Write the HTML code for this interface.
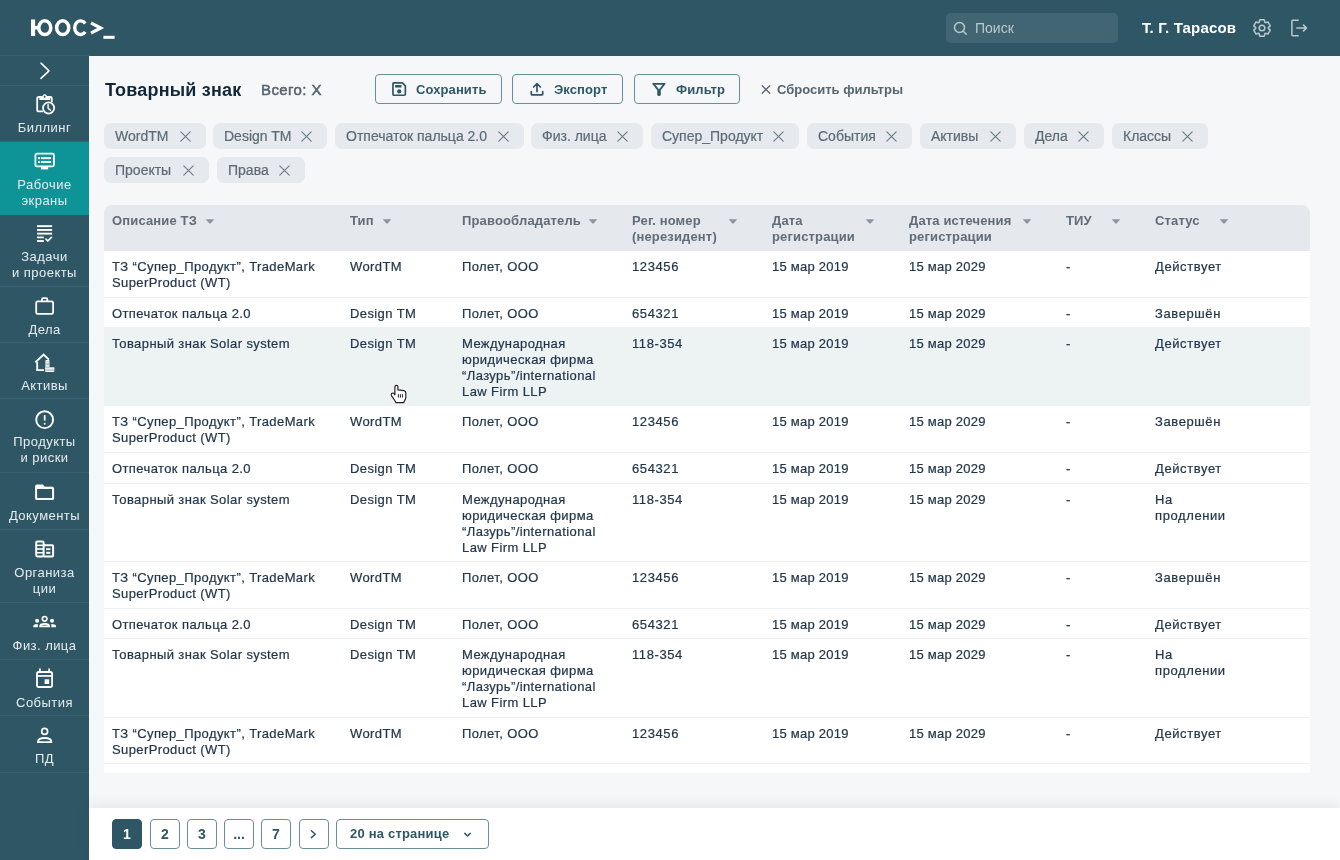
<!DOCTYPE html>
<html lang="ru"><head><meta charset="utf-8">
<style>
*{box-sizing:border-box;margin:0;padding:0}
html,body{width:1340px;height:860px;overflow:hidden}
body{will-change:transform}
body{position:relative;background:#F6F7F9;font-family:"Liberation Sans",sans-serif;color:#1F3446}
.abs{position:absolute}
#hdr{left:0;top:0;width:1340px;height:56px;background:#2E5665}
#logo{left:30px;top:13px;font-size:24px;font-weight:700;color:#fff;letter-spacing:-0.6px;line-height:30px}
#search{left:946px;top:13px;width:172px;height:30px;background:#416572;border-radius:5px}
#search span{position:absolute;left:29px;top:7px;font-size:14px;line-height:16px;color:#B9C9CD}
#user{left:1142px;top:18px;font-size:15px;font-weight:700;color:#fff;line-height:20px;letter-spacing:0.15px}
#side{left:0;top:56px;width:89px;height:804px;background:#2E5665}
.si{position:absolute;left:0;width:89px;text-align:center;color:#E6EDEF;font-size:13px;line-height:16px;letter-spacing:0.45px}
.si .tx{position:absolute;left:0;width:89px;top:35px}
.si.act{background:#0E9496}
.sep{position:absolute;left:0;width:89px;height:1px;background:#3A6372}
#main{left:89px;top:56px;width:1251px;height:804px}

/*MAIN*/
.title{font-size:18px;font-weight:700;color:#12263A;line-height:22px;letter-spacing:0.2px}
.total{font-size:15px;color:#56646F;line-height:18px;letter-spacing:0.4px;-webkit-text-stroke:0.5px #56646F}
.btn{top:74px;height:30px;border:1px solid #6A8E98;border-radius:4px}
.btxt{top:82px;font-size:13px;font-weight:700;color:#2E5665;line-height:16px;letter-spacing:0.1px}
.rst{top:82px;font-size:13px;font-weight:700;color:#56656F;line-height:16px}
.chip{height:26px;background:#E6E9ED;border-radius:7px}
.chip span{position:absolute;left:11px;top:5px;font-size:14px;line-height:16px;color:#5D6B75;-webkit-text-stroke:0.2px #5D6B75}
.tbox{left:104px;top:205px;width:1206px;height:568px;background:#fff;border-radius:8px 8px 0 0}
.thead{left:104px;top:205px;width:1206px;height:46px;background:#E5E8EC;border-radius:8px 8px 0 0}
.th{top:213px;font-size:13px;font-weight:700;color:#606D78;line-height:16px;letter-spacing:0.15px}
.hl{left:104px;width:1206px;background:#EDF2F3}
.bd{left:104px;width:1206px;height:1px;background:#EFF1F3}
.td{font-size:13px;color:#22364A;line-height:16px;letter-spacing:0.4px;white-space:nowrap;-webkit-text-stroke:0.2px #22364A}
.foot{left:89px;top:808px;width:1251px;height:52px;background:#fff;box-shadow:0 -4px 12px rgba(40,60,80,0.08)}
.pg{top:819px;width:30px;height:30px;border:1px solid #6A8E98;border-radius:4px;text-align:center;font-size:14px;font-weight:700;color:#2E5665;line-height:28px}
.pg.act{background:#2E5665;border-color:#2E5665;color:#fff}
.pg.sel{text-align:left}
.pg.sel span{position:absolute;left:13px;top:0;font-size:13px;letter-spacing:0.2px}
/*ENDMAIN*/
</style></head><body>
<div id="hdr" class="abs">
  <svg class="abs" style="left:0;top:0" width="130" height="56" viewBox="0 0 130 56"><g fill="#fff">
<rect x="31" y="19.5" width="4.1" height="16.5"/><rect x="34" y="25.9" width="4" height="3.6"/></g>
<g fill="none" stroke="#fff" stroke-width="3.5"><ellipse cx="44.8" cy="27.7" rx="6.0" ry="6.85"/><ellipse cx="62.7" cy="27.7" rx="6.05" ry="6.85"/>
<path d="M85.25 23.48 A5.9 6.85 0 1 0 85.25 31.92" stroke-width="3.4"/>
<path d="M91 22.9 L100.6 28 L91 33.1" stroke-width="3.3" stroke-linejoin="miter" stroke-miterlimit="10"/></g>
<rect x="103.4" y="35.8" width="11.2" height="3" fill="#fff"/></svg>
  <div id="search" class="abs">
    <svg class="abs" style="left:7px;top:8px" width="15" height="15" viewBox="0 0 15 15"><circle cx="6.5" cy="6.5" r="5" fill="none" stroke="#B9C9CD" stroke-width="1.5"/><path d="M10.2 10.2 L13.3 13.3" stroke="#B9C9CD" stroke-width="1.5" stroke-linecap="round"/></svg>
    <span>Поиск</span>
  </div>
  <div id="user" class="abs">Т. Г. Тарасов</div>
  <svg class="abs" style="left:1247px;top:13px" width="30" height="30" viewBox="0 0 30 30"><path d="M12.15 9.38 L12.73 6.81 L17.27 6.81 L17.85 9.38 L18.44 9.72 L20.96 8.94 L23.23 12.87 L21.29 14.66 L21.29 15.34 L23.23 17.13 L20.96 21.06 L18.44 20.28 L17.85 20.62 L17.27 23.19 L12.73 23.19 L12.15 20.62 L11.56 20.28 L9.04 21.06 L6.77 17.13 L8.71 15.34 L8.71 14.66 L6.77 12.87 L9.04 8.94 L11.56 9.72 Z" fill="none" stroke="#B9C9CD" stroke-width="1.5" stroke-linejoin="round"/><circle cx="15" cy="15" r="2.8" fill="none" stroke="#B9C9CD" stroke-width="1.5"/></svg>
  <svg class="abs" style="left:1285px;top:13px" width="30" height="30" viewBox="0 0 30 30"><path d="M13.7 7.3 H7.9 Q6.9 7.3 6.9 8.3 V21.7 Q6.9 22.7 7.9 22.7 H13.7" fill="none" stroke="#B9C9CD" stroke-width="1.5" stroke-linecap="butt"/><path d="M11.9 15 H21.2 M18.5 12.1 L21.5 15 L18.5 17.9" fill="none" stroke="#B9C9CD" stroke-width="1.6" stroke-linecap="round" stroke-linejoin="round"/></svg>
</div>
<div id="side" class="abs"></div>
<div id="sidec">
<div class="sep" style="top:55px"></div>
<div class="sep" style="top:85px"></div>
<div class="si" style="top:85.5px;height:56.5px"><div class="tx" style="top:34px">Биллинг</div></div>
<div class="sep" style="top:141.0px"></div>
<div class="si act" style="top:142.0px;height:73.0px"><div class="tx">Рабочие<br>экраны</div></div>
<div class="si" style="top:215.0px;height:71.5px"><div class="tx" style="top:34px;line-height:15.5px">Задачи<br>и проекты</div></div>
<div class="sep" style="top:285.5px"></div>
<div class="si" style="top:286.5px;height:56.2px"><div class="tx">Дела</div></div>
<div class="sep" style="top:341.7px"></div>
<div class="si" style="top:342.7px;height:56.6px"><div class="tx">Активы</div></div>
<div class="sep" style="top:398.3px"></div>
<div class="si" style="top:399.3px;height:74.1px"><div class="tx">Продукты<br>и риски</div></div>
<div class="sep" style="top:472.4px"></div>
<div class="si" style="top:473.4px;height:56.8px"><div class="tx">Документы</div></div>
<div class="sep" style="top:529.2px"></div>
<div class="si" style="top:530.2px;height:72.6px"><div class="tx">Организа<br>ции</div></div>
<div class="sep" style="top:601.8px"></div>
<div class="si" style="top:602.8px;height:56.8px"><div class="tx">Физ. лица</div></div>
<div class="sep" style="top:658.6px"></div>
<div class="si" style="top:659.6px;height:56.0px"><div class="tx">События</div></div>
<div class="sep" style="top:714.6px"></div>
<div class="si" style="top:715.6px;height:57.7px"><div class="tx">ПД</div></div>
<div class="sep" style="top:772.3px"></div>
<svg class="abs" style="left:30px;top:56px" width="30" height="30" viewBox="0 0 30 30"><path d="M11 7.2 L19 14.8 L11 22.4" fill="none" stroke="#fff" stroke-width="1.6" stroke-linecap="round" stroke-linejoin="round"/></svg>
<svg class="abs" style="left:30px;top:90px" width="30" height="30" viewBox="0 0 30 30"><path d="M12.4 21.4 H8.7 Q7.2 21.4 7.2 19.9 V8.5 Q7.2 7 8.7 7 H12 M17.3 7 H20.3 Q21.8 7 21.8 8.5 V11.6" fill="none" stroke="#fff" stroke-width="1.8" stroke-linecap="round"/>
<path d="M9.4 9.9 V8.1 H12.1 Q12.2 4.3 14.65 4.3 Q17.1 4.3 17.2 8.1 H20.2 V9.9 Z" fill="#fff"/><circle cx="14.65" cy="6.8" r="1" fill="#2E5665"/>
<circle cx="18.6" cy="18" r="5.6" fill="none" stroke="#fff" stroke-width="1.7"/><path d="M18.1 14.5 V18.3 L20.6 20.4" fill="none" stroke="#fff" stroke-width="1.4" stroke-linecap="round" stroke-linejoin="round"/></svg>
<svg class="abs" style="left:30px;top:146px" width="30" height="30" viewBox="0 0 30 30"><rect x="5.4" y="7.7" width="18.5" height="12.7" rx="1.5" fill="none" stroke="#fff" stroke-width="1.8"/>
<rect x="8" y="11.2" width="2.1" height="1.9" fill="#fff"/><rect x="8" y="15" width="2.1" height="1.9" fill="#fff"/>
<rect x="11" y="11.2" width="10.1" height="1.9" fill="#fff"/><rect x="11" y="15" width="10.1" height="1.9" fill="#fff"/>
<rect x="11" y="20.6" width="7.1" height="2.8" fill="#fff"/></svg>
<svg class="abs" style="left:30px;top:218px" width="30" height="30" viewBox="0 0 30 30"><g fill="#fff"><rect x="7" y="7.2" width="15.1" height="1.9"/><rect x="7" y="11" width="15.1" height="1.9"/><rect x="7" y="14.7" width="15.1" height="1.9"/>
<rect x="7" y="18.5" width="6.8" height="1.8"/><rect x="7" y="22.1" width="6.8" height="1.9"/></g>
<path d="M16 21.2 L17.8 23 L21.4 19.3" fill="none" stroke="#fff" stroke-width="1.7" stroke-linecap="round" stroke-linejoin="round"/></svg>
<svg class="abs" style="left:30px;top:290px" width="30" height="30" viewBox="0 0 30 30"><rect x="6.2" y="11.4" width="16.9" height="12.5" rx="1.6" fill="none" stroke="#fff" stroke-width="1.8"/>
<path d="M12 11.2 V9.3 Q12 8.1 13.2 8.1 H16.1 Q17.3 8.1 17.3 9.3 V11.2" fill="none" stroke="#fff" stroke-width="1.8"/></svg>
<svg class="abs" style="left:30px;top:347px" width="30" height="30" viewBox="0 0 30 30"><path d="M14 23.1 H7.2 V15.3 M5.3 15.4 L13.6 7.5 L18.9 12.6" fill="none" stroke="#fff" stroke-width="1.9" stroke-linejoin="miter"/>
<g fill="#fff"><rect x="15.3" y="13.1" width="4.2" height="11.8" rx="0.8"/><rect x="15.3" y="20" width="9.1" height="4.9" rx="0.8"/></g>
<g fill="#2E5665" opacity="0.6"><rect x="15.3" y="14.6" width="4.2" height="0.55"/><rect x="15.3" y="16.0" width="4.2" height="0.55"/><rect x="15.3" y="17.4" width="4.2" height="0.55"/><rect x="15.3" y="18.8" width="4.2" height="0.55"/><rect x="15.3" y="20.5" width="9.1" height="0.55"/><rect x="15.3" y="21.9" width="9.1" height="0.55"/><rect x="15.3" y="23.3" width="9.1" height="0.55"/></g></svg>
<svg class="abs" style="left:30px;top:404px" width="30" height="30" viewBox="0 0 30 30"><circle cx="14.65" cy="15.7" r="8.45" fill="none" stroke="#fff" stroke-width="1.9"/>
<rect x="13.85" y="11.2" width="1.7" height="5.4" fill="#fff"/><rect x="13.85" y="18.8" width="1.7" height="1.8" fill="#fff"/></svg>
<svg class="abs" style="left:30px;top:476px" width="30" height="30" viewBox="0 0 30 30"><path d="M6.1 22.4 V10.4 Q6.1 9.6 7 9.6 H12.6 L14.3 11.8 H22.3 Q23.1 11.8 23.1 12.7 V22.4 Q23.1 23.1 22.3 23.1 H7 Q6.1 23.1 6.1 22.4 Z" fill="none" stroke="#fff" stroke-width="2" stroke-linejoin="round"/>
<path d="M6.1 11.9 H23" stroke="#fff" stroke-width="2"/><path d="M6 9.4 H12.8 L14.6 12.4 H6 Z" fill="#fff"/></svg>
<svg class="abs" style="left:30px;top:533px" width="30" height="30" viewBox="0 0 30 30"><rect x="6.2" y="8.5" width="7.4" height="14.9" rx="1.3" fill="none" stroke="#fff" stroke-width="2"/>
<g fill="#fff"><rect x="6.2" y="11.6" width="7.4" height="1.5"/><rect x="6.2" y="15.2" width="7.4" height="1.6"/><rect x="6.2" y="19" width="7.4" height="1.5"/></g>
<path d="M13.6 12.2 H22.1 Q23.1 12.2 23.1 13.2 V22.4 Q23.1 23.4 22.1 23.4 H13.6" fill="none" stroke="#fff" stroke-width="2"/>
<g fill="#fff"><rect x="16.2" y="15.2" width="4.2" height="1.9"/><rect x="16.2" y="18.8" width="4.2" height="2"/></g></svg>
<svg class="abs" style="left:30px;top:605px" width="30" height="30" viewBox="0 0 30 30"><circle cx="14.65" cy="13.8" r="2.3" fill="none" stroke="#fff" stroke-width="1.6"/>
<path d="M10 21.4 Q10 18.9 14.65 18.9 Q19.3 18.9 19.3 21.4 Z" fill="none" stroke="#fff" stroke-width="1.7" stroke-linejoin="round"/>
<g fill="#fff"><circle cx="7.15" cy="15.7" r="2"/><circle cx="22" cy="15.7" r="2"/>
<path d="M3.3 22.3 V21 Q3.5 19 7.8 19 V22.3 Z"/><path d="M21.3 22.3 V19 Q25.8 19 26 21 V22.3 Z"/></g></svg>
<svg class="abs" style="left:30px;top:662px" width="30" height="30" viewBox="0 0 30 30"><rect x="7" y="10" width="15.1" height="15" rx="1.8" fill="none" stroke="#fff" stroke-width="1.8"/>
<path d="M7 13.95 H22" stroke="#fff" stroke-width="1.7"/><path d="M9.95 7 V10 M19.15 7 V10" stroke="#fff" stroke-width="1.7" stroke-linecap="round"/>
<rect x="14.6" y="17.3" width="4.6" height="4.7" fill="#fff"/></svg>
<svg class="abs" style="left:30px;top:719px" width="30" height="30" viewBox="0 0 30 30"><circle cx="14.65" cy="12.4" r="2.95" fill="none" stroke="#fff" stroke-width="1.7"/>
<path d="M7.9 23.2 Q7.9 19 14.65 19 Q21.4 19 21.4 23.2 Z" fill="none" stroke="#fff" stroke-width="1.8" stroke-linejoin="round"/></svg>
</div>
<div id="main" class="abs"></div>
<!--MC-->
<div class="abs title" style="left:105px;top:79px">Товарный знак</div>
<div class="abs total" style="left:261px;top:81px">Всего: X</div>
<div class="abs btn" style="left:375px;width:127px"></div><svg class="abs" style="left:390px;top:81px" width="18" height="18" viewBox="0 0 18 18"><path d="M4.1 1.85 H12.3 L15.35 4.9 V13.1 Q15.35 14.25 14.2 14.25 H4.1 Q2.95 14.25 2.95 13.1 V3 Q2.95 1.85 4.1 1.85 Z" fill="none" stroke="#2E5665" stroke-width="1.7" stroke-linejoin="round"/><rect x="5" y="4.1" width="6.5" height="2.5" rx="0.4" fill="#2E5665"/><circle cx="9.2" cy="10.4" r="2.1" fill="#2E5665"/></svg><div class="abs btxt" style="left:416px">Сохранить</div>
<div class="abs btn" style="left:512px;width:111px"></div><svg class="abs" style="left:528px;top:81px" width="18" height="18" viewBox="0 0 18 18"><path d="M9 10.6 V2.8 M5.6 6 L9 2.6 L12.4 6" fill="none" stroke="#2E5665" stroke-width="1.7" stroke-linecap="round" stroke-linejoin="round"/><path d="M3.3 10.7 V12.9 Q3.3 13.9 4.3 13.9 H13.7 Q14.7 13.9 14.7 12.9 V10.7" fill="none" stroke="#2E5665" stroke-width="1.7" stroke-linecap="round"/></svg><div class="abs btxt" style="left:554px">Экспорт</div>
<div class="abs btn" style="left:634px;width:106px"></div><svg class="abs" style="left:650px;top:81px" width="18" height="18" viewBox="0 0 18 18"><path d="M3.4 2.8 H14.6 L10.2 8.4" fill="none" stroke="#2E5665" stroke-width="1.8" stroke-linejoin="round" stroke-linecap="round"/><path d="M3.4 2.8 L7.8 8.4" fill="none" stroke="#2E5665" stroke-width="1.8" stroke-linecap="round"/><path d="M7.25 8.2 H10.75 V13.4 Q10.75 15.1 9 15.1 Q7.25 15.1 7.25 13.4 Z" fill="#2E5665"/></svg><div class="abs btxt" style="left:676px">Фильтр</div>
<svg class="abs" style="left:759px;top:83px" width="13" height="13" viewBox="0 0 13 13"><path d="M3.2 2.7 L10.8 10.3 M10.8 2.7 L3.2 10.3" stroke="#56656F" stroke-width="1.25" stroke-linecap="round"/></svg>
<div class="abs rst" style="left:777px">Сбросить фильтры</div>
<div class="abs chip" style="left:104px;top:123px;width:102px"><span>WordTM</span><svg style="position:absolute;right:15px;top:8px" width="11" height="11" viewBox="0 0 11 11"><path d="M0.8 0.8 L10.2 10.2 M10.2 0.8 L0.8 10.2" stroke="#6F7C86" stroke-width="1.15" stroke-linecap="round"/></svg></div>
<div class="abs chip" style="left:213px;top:123px;width:114px"><span>Design TM</span><svg style="position:absolute;right:15px;top:8px" width="11" height="11" viewBox="0 0 11 11"><path d="M0.8 0.8 L10.2 10.2 M10.2 0.8 L0.8 10.2" stroke="#6F7C86" stroke-width="1.15" stroke-linecap="round"/></svg></div>
<div class="abs chip" style="left:335px;top:123px;width:189px"><span>Отпечаток пальца 2.0</span><svg style="position:absolute;right:15px;top:8px" width="11" height="11" viewBox="0 0 11 11"><path d="M0.8 0.8 L10.2 10.2 M10.2 0.8 L0.8 10.2" stroke="#6F7C86" stroke-width="1.15" stroke-linecap="round"/></svg></div>
<div class="abs chip" style="left:531px;top:123px;width:112px"><span>Физ. лица</span><svg style="position:absolute;right:15px;top:8px" width="11" height="11" viewBox="0 0 11 11"><path d="M0.8 0.8 L10.2 10.2 M10.2 0.8 L0.8 10.2" stroke="#6F7C86" stroke-width="1.15" stroke-linecap="round"/></svg></div>
<div class="abs chip" style="left:651px;top:123px;width:148px"><span>Супер_Продукт</span><svg style="position:absolute;right:15px;top:8px" width="11" height="11" viewBox="0 0 11 11"><path d="M0.8 0.8 L10.2 10.2 M10.2 0.8 L0.8 10.2" stroke="#6F7C86" stroke-width="1.15" stroke-linecap="round"/></svg></div>
<div class="abs chip" style="left:807px;top:123px;width:105px"><span>События</span><svg style="position:absolute;right:15px;top:8px" width="11" height="11" viewBox="0 0 11 11"><path d="M0.8 0.8 L10.2 10.2 M10.2 0.8 L0.8 10.2" stroke="#6F7C86" stroke-width="1.15" stroke-linecap="round"/></svg></div>
<div class="abs chip" style="left:920px;top:123px;width:96px"><span>Активы</span><svg style="position:absolute;right:15px;top:8px" width="11" height="11" viewBox="0 0 11 11"><path d="M0.8 0.8 L10.2 10.2 M10.2 0.8 L0.8 10.2" stroke="#6F7C86" stroke-width="1.15" stroke-linecap="round"/></svg></div>
<div class="abs chip" style="left:1024px;top:123px;width:80px"><span>Дела</span><svg style="position:absolute;right:15px;top:8px" width="11" height="11" viewBox="0 0 11 11"><path d="M0.8 0.8 L10.2 10.2 M10.2 0.8 L0.8 10.2" stroke="#6F7C86" stroke-width="1.15" stroke-linecap="round"/></svg></div>
<div class="abs chip" style="left:1112px;top:123px;width:96px"><span>Классы</span><svg style="position:absolute;right:15px;top:8px" width="11" height="11" viewBox="0 0 11 11"><path d="M0.8 0.8 L10.2 10.2 M10.2 0.8 L0.8 10.2" stroke="#6F7C86" stroke-width="1.15" stroke-linecap="round"/></svg></div>
<div class="abs chip" style="left:104px;top:157px;width:105px"><span>Проекты</span><svg style="position:absolute;right:15px;top:8px" width="11" height="11" viewBox="0 0 11 11"><path d="M0.8 0.8 L10.2 10.2 M10.2 0.8 L0.8 10.2" stroke="#6F7C86" stroke-width="1.15" stroke-linecap="round"/></svg></div>
<div class="abs chip" style="left:217px;top:157px;width:88px"><span>Права</span><svg style="position:absolute;right:15px;top:8px" width="11" height="11" viewBox="0 0 11 11"><path d="M0.8 0.8 L10.2 10.2 M10.2 0.8 L0.8 10.2" stroke="#6F7C86" stroke-width="1.15" stroke-linecap="round"/></svg></div>
<div class="abs tbox"></div>
<div class="abs thead"></div>
<div class="abs th" style="left:112px">Описание ТЗ</div>
<svg class="abs" style="left:205px;top:217px" width="10" height="8" viewBox="0 0 10 8"><path d="M1.3 2.2 H8.7 Q9.4 2.2 8.9 2.8 L5.5 6.4 Q5 6.9 4.5 6.4 L1.1 2.8 Q0.6 2.2 1.3 2.2 Z" fill="#8A959E"/></svg>
<div class="abs th" style="left:350px">Тип</div>
<svg class="abs" style="left:382px;top:217px" width="10" height="8" viewBox="0 0 10 8"><path d="M1.3 2.2 H8.7 Q9.4 2.2 8.9 2.8 L5.5 6.4 Q5 6.9 4.5 6.4 L1.1 2.8 Q0.6 2.2 1.3 2.2 Z" fill="#8A959E"/></svg>
<div class="abs th" style="left:462px">Правообладатель</div>
<svg class="abs" style="left:588px;top:217px" width="10" height="8" viewBox="0 0 10 8"><path d="M1.3 2.2 H8.7 Q9.4 2.2 8.9 2.8 L5.5 6.4 Q5 6.9 4.5 6.4 L1.1 2.8 Q0.6 2.2 1.3 2.2 Z" fill="#8A959E"/></svg>
<div class="abs th" style="left:632px">Рег. номер<br>(нерезидент)</div>
<svg class="abs" style="left:728px;top:217px" width="10" height="8" viewBox="0 0 10 8"><path d="M1.3 2.2 H8.7 Q9.4 2.2 8.9 2.8 L5.5 6.4 Q5 6.9 4.5 6.4 L1.1 2.8 Q0.6 2.2 1.3 2.2 Z" fill="#8A959E"/></svg>
<div class="abs th" style="left:772px">Дата<br>регистрации</div>
<svg class="abs" style="left:865px;top:217px" width="10" height="8" viewBox="0 0 10 8"><path d="M1.3 2.2 H8.7 Q9.4 2.2 8.9 2.8 L5.5 6.4 Q5 6.9 4.5 6.4 L1.1 2.8 Q0.6 2.2 1.3 2.2 Z" fill="#8A959E"/></svg>
<div class="abs th" style="left:909px">Дата истечения<br>регистрации</div>
<svg class="abs" style="left:1022px;top:217px" width="10" height="8" viewBox="0 0 10 8"><path d="M1.3 2.2 H8.7 Q9.4 2.2 8.9 2.8 L5.5 6.4 Q5 6.9 4.5 6.4 L1.1 2.8 Q0.6 2.2 1.3 2.2 Z" fill="#8A959E"/></svg>
<div class="abs th" style="left:1066px">ТИУ</div>
<svg class="abs" style="left:1111px;top:217px" width="10" height="8" viewBox="0 0 10 8"><path d="M1.3 2.2 H8.7 Q9.4 2.2 8.9 2.8 L5.5 6.4 Q5 6.9 4.5 6.4 L1.1 2.8 Q0.6 2.2 1.3 2.2 Z" fill="#8A959E"/></svg>
<div class="abs th" style="left:1155px">Статус</div>
<svg class="abs" style="left:1219px;top:217px" width="10" height="8" viewBox="0 0 10 8"><path d="M1.3 2.2 H8.7 Q9.4 2.2 8.9 2.8 L5.5 6.4 Q5 6.9 4.5 6.4 L1.1 2.8 Q0.6 2.2 1.3 2.2 Z" fill="#8A959E"/></svg>
<div class="abs bd" style="top:297px"></div>
<div class="abs td" style="left:112px;top:259px">ТЗ “Супер_Продукт”, TradeMark<br>SuperProduct (WT)</div>
<div class="abs td" style="left:350px;top:259px">WordTM</div>
<div class="abs td" style="left:462px;top:259px">Полет, ООО</div>
<div class="abs td" style="left:632px;top:259px;letter-spacing:0.6px">123456</div>
<div class="abs td" style="left:772px;top:259px;letter-spacing:0.25px">15 мар 2019</div>
<div class="abs td" style="left:909px;top:259px;letter-spacing:0.25px">15 мар 2029</div>
<div class="abs td" style="left:1066px;top:259px">-</div>
<div class="abs td" style="left:1155px;top:259px;letter-spacing:0.6px">Действует</div>
<div class="abs td" style="left:112px;top:306px">Отпечаток пальца 2.0</div>
<div class="abs td" style="left:350px;top:306px">Design TM</div>
<div class="abs td" style="left:462px;top:306px">Полет, ООО</div>
<div class="abs td" style="left:632px;top:306px;letter-spacing:0.6px">654321</div>
<div class="abs td" style="left:772px;top:306px;letter-spacing:0.25px">15 мар 2019</div>
<div class="abs td" style="left:909px;top:306px;letter-spacing:0.25px">15 мар 2029</div>
<div class="abs td" style="left:1066px;top:306px">-</div>
<div class="abs td" style="left:1155px;top:306px;letter-spacing:0.6px">Завершён</div>
<div class="abs hl" style="top:327px;height:79px"></div>
<div class="abs td" style="left:112px;top:336px">Товарный знак Solar system</div>
<div class="abs td" style="left:350px;top:336px">Design TM</div>
<div class="abs td" style="left:462px;top:336px">Международная<br>юридическая фирма<br>“Лазурь”/international<br>Law Firm LLP</div>
<div class="abs td" style="left:632px;top:336px;letter-spacing:0.6px">118-354</div>
<div class="abs td" style="left:772px;top:336px;letter-spacing:0.25px">15 мар 2019</div>
<div class="abs td" style="left:909px;top:336px;letter-spacing:0.25px">15 мар 2029</div>
<div class="abs td" style="left:1066px;top:336px">-</div>
<div class="abs td" style="left:1155px;top:336px;letter-spacing:0.6px">Действует</div>
<div class="abs bd" style="top:452px"></div>
<div class="abs td" style="left:112px;top:414px">ТЗ “Супер_Продукт”, TradeMark<br>SuperProduct (WT)</div>
<div class="abs td" style="left:350px;top:414px">WordTM</div>
<div class="abs td" style="left:462px;top:414px">Полет, ООО</div>
<div class="abs td" style="left:632px;top:414px;letter-spacing:0.6px">123456</div>
<div class="abs td" style="left:772px;top:414px;letter-spacing:0.25px">15 мар 2019</div>
<div class="abs td" style="left:909px;top:414px;letter-spacing:0.25px">15 мар 2029</div>
<div class="abs td" style="left:1066px;top:414px">-</div>
<div class="abs td" style="left:1155px;top:414px;letter-spacing:0.6px">Завершён</div>
<div class="abs bd" style="top:483px"></div>
<div class="abs td" style="left:112px;top:461px">Отпечаток пальца 2.0</div>
<div class="abs td" style="left:350px;top:461px">Design TM</div>
<div class="abs td" style="left:462px;top:461px">Полет, ООО</div>
<div class="abs td" style="left:632px;top:461px;letter-spacing:0.6px">654321</div>
<div class="abs td" style="left:772px;top:461px;letter-spacing:0.25px">15 мар 2019</div>
<div class="abs td" style="left:909px;top:461px;letter-spacing:0.25px">15 мар 2029</div>
<div class="abs td" style="left:1066px;top:461px">-</div>
<div class="abs td" style="left:1155px;top:461px;letter-spacing:0.6px">Действует</div>
<div class="abs bd" style="top:561px"></div>
<div class="abs td" style="left:112px;top:492px">Товарный знак Solar system</div>
<div class="abs td" style="left:350px;top:492px">Design TM</div>
<div class="abs td" style="left:462px;top:492px">Международная<br>юридическая фирма<br>“Лазурь”/international<br>Law Firm LLP</div>
<div class="abs td" style="left:632px;top:492px;letter-spacing:0.6px">118-354</div>
<div class="abs td" style="left:772px;top:492px;letter-spacing:0.25px">15 мар 2019</div>
<div class="abs td" style="left:909px;top:492px;letter-spacing:0.25px">15 мар 2029</div>
<div class="abs td" style="left:1066px;top:492px">-</div>
<div class="abs td" style="left:1155px;top:492px;letter-spacing:0.6px">На<br>продлении</div>
<div class="abs bd" style="top:608px"></div>
<div class="abs td" style="left:112px;top:570px">ТЗ “Супер_Продукт”, TradeMark<br>SuperProduct (WT)</div>
<div class="abs td" style="left:350px;top:570px">WordTM</div>
<div class="abs td" style="left:462px;top:570px">Полет, ООО</div>
<div class="abs td" style="left:632px;top:570px;letter-spacing:0.6px">123456</div>
<div class="abs td" style="left:772px;top:570px;letter-spacing:0.25px">15 мар 2019</div>
<div class="abs td" style="left:909px;top:570px;letter-spacing:0.25px">15 мар 2029</div>
<div class="abs td" style="left:1066px;top:570px">-</div>
<div class="abs td" style="left:1155px;top:570px;letter-spacing:0.6px">Завершён</div>
<div class="abs bd" style="top:638px"></div>
<div class="abs td" style="left:112px;top:617px">Отпечаток пальца 2.0</div>
<div class="abs td" style="left:350px;top:617px">Design TM</div>
<div class="abs td" style="left:462px;top:617px">Полет, ООО</div>
<div class="abs td" style="left:632px;top:617px;letter-spacing:0.6px">654321</div>
<div class="abs td" style="left:772px;top:617px;letter-spacing:0.25px">15 мар 2019</div>
<div class="abs td" style="left:909px;top:617px;letter-spacing:0.25px">15 мар 2029</div>
<div class="abs td" style="left:1066px;top:617px">-</div>
<div class="abs td" style="left:1155px;top:617px;letter-spacing:0.6px">Действует</div>
<div class="abs bd" style="top:717px"></div>
<div class="abs td" style="left:112px;top:647px">Товарный знак Solar system</div>
<div class="abs td" style="left:350px;top:647px">Design TM</div>
<div class="abs td" style="left:462px;top:647px">Международная<br>юридическая фирма<br>“Лазурь”/international<br>Law Firm LLP</div>
<div class="abs td" style="left:632px;top:647px;letter-spacing:0.6px">118-354</div>
<div class="abs td" style="left:772px;top:647px;letter-spacing:0.25px">15 мар 2019</div>
<div class="abs td" style="left:909px;top:647px;letter-spacing:0.25px">15 мар 2029</div>
<div class="abs td" style="left:1066px;top:647px">-</div>
<div class="abs td" style="left:1155px;top:647px;letter-spacing:0.6px">На<br>продлении</div>
<div class="abs bd" style="top:763px"></div>
<div class="abs td" style="left:112px;top:726px">ТЗ “Супер_Продукт”, TradeMark<br>SuperProduct (WT)</div>
<div class="abs td" style="left:350px;top:726px">WordTM</div>
<div class="abs td" style="left:462px;top:726px">Полет, ООО</div>
<div class="abs td" style="left:632px;top:726px;letter-spacing:0.6px">123456</div>
<div class="abs td" style="left:772px;top:726px;letter-spacing:0.25px">15 мар 2019</div>
<div class="abs td" style="left:909px;top:726px;letter-spacing:0.25px">15 мар 2029</div>
<div class="abs td" style="left:1066px;top:726px">-</div>
<div class="abs td" style="left:1155px;top:726px;letter-spacing:0.6px">Действует</div>
<svg class="abs" style="left:385px;top:378px" width="30" height="30" viewBox="0 0 30 30"><path d="M9.8 22.5 L6.6 17.8 Q5.6 16.2 7 15.2 Q8.2 14.6 9.2 15.8 L9.9 16.8 V9 Q9.9 7.3 11.4 7.3 Q12.9 7.3 12.9 9 V11.9 L18.8 12.7 Q20.8 13.1 20.8 15 V19.5 Q20.7 21.3 19.4 22.9 L18.8 24.6 H10.8 Z" fill="#fff" stroke="#222" stroke-width="1.2" stroke-linejoin="round"/><path d="M13.4 16.2 V19.6 M15.4 16.2 V19.6 M17.4 16.2 V19.6" stroke="#222" stroke-width="1"/></svg>
<div class="abs foot"></div>
<div class="abs pg act" style="left:112px">1</div>
<div class="abs pg" style="left:150px">2</div>
<div class="abs pg" style="left:187px">3</div>
<div class="abs pg" style="left:224px">...</div>
<div class="abs pg" style="left:261px">7</div>
<div class="abs pg" style="left:299px"><svg style="position:absolute;left:9px;top:8px" width="10" height="12" viewBox="0 0 10 12"><path d="M2.4 2.75 L6.3 6.2 L2.4 9.65" fill="none" stroke="#2E5665" stroke-width="1.5" stroke-linecap="round" stroke-linejoin="round"/></svg></div>
<div class="abs pg sel" style="left:336px;width:153px"><span>20 на странице</span><svg style="position:absolute;left:126px;top:11px" width="9" height="8" viewBox="0 0 9 8"><path d="M1.8 2.4 L4.5 5.0 L7.2 2.4" fill="none" stroke="#2E5665" stroke-width="1.5" stroke-linecap="round" stroke-linejoin="round"/></svg></div>
<!--ENDMC-->
</body></html>
